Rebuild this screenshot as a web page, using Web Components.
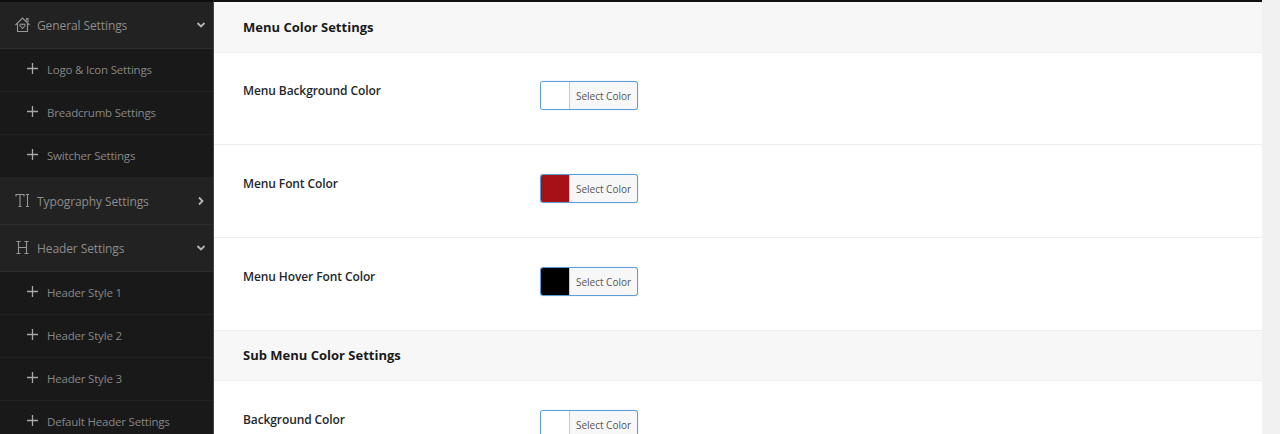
<!DOCTYPE html>
<html>
<head>
<meta charset="utf-8">
<style>
  html, body { margin: 0; height: 434px; overflow: hidden; background: #f1f1f1; font-family: "Open Sans", sans-serif; }
</style>
</head>
<body>
<settings-page>
  <side-nav slot="nav">
    <nav-group label="General Settings" icon="home" open></nav-group>
    <nav-item>Logo &amp; Icon Settings</nav-item>
    <nav-item>Breadcrumb Settings</nav-item>
    <nav-item>Switcher Settings</nav-item>
    <nav-group label="Typography Settings" icon="type"></nav-group>
    <nav-group label="Header Settings" icon="heading" open></nav-group>
    <nav-item>Header Style 1</nav-item>
    <nav-item>Header Style 2</nav-item>
    <nav-item>Header Style 3</nav-item>
    <nav-item>Default Header Settings</nav-item>
  </side-nav>
  <section-head>Menu Color Settings</section-head>
  <color-row label="Menu Background Color" color="#ffffff"></color-row>
  <color-row label="Menu Font Color" color="#a51116"></color-row>
  <color-row label="Menu Hover Font Color" color="#000000"></color-row>
  <section-head>Sub Menu Color Settings</section-head>
  <color-row label="Background Color" color="#ffffff"></color-row>
</settings-page>

<script>
class SettingsPage extends HTMLElement {
  constructor() {
    super();
    this.attachShadow({ mode: 'open' }).innerHTML = `
      <style>
        :host { display: grid; grid-template-columns: 214px 1048px 18px; height: 434px; overflow: hidden; }
        .main { background: #fff; border-top: 2px solid #111; overflow: hidden; min-width: 0; }
        .gutter { background: #f1f1f1; }
      </style>
      <slot name="nav"></slot>
      <div class="main"><slot></slot></div>
      <div class="gutter"></div>`;
  }
}

class SideNav extends HTMLElement {
  constructor() {
    super();
    this.attachShadow({ mode: 'open' }).innerHTML = `
      <style>
        :host { display: block; background: #191919; border-top: 2px solid #0d0d0d; border-right: 1px solid #444; height: 432px; overflow: hidden; }
      </style>
      <slot></slot>`;
  }
}

const NAV_ICONS = {
  home: `<path d="M.5 9 7.5 2l7 7M2.5 7.5V15.5h10V7.5M11.5 4.5V2.5H13v3.5"/><path d="M7.5 12.5 5.2 10c-1-1.400 1.100-2.900 2.300-1.300C8.700 7.100 10.800 8.600 9.800 10z"/>`,
  type: `<path d="M1 4.500V2.500h8v2M5 2.500v12M3.500 14.500h3M11 2.500h3M12.500 2.500v12M11 14.500h3"/>`,
  heading: `<path d="M1.500 2.500h4M3.500 2.500v12M1.500 14.500h4M9.500 2.500h4M11.500 2.500v12M9.500 14.500h4M3.500 8.500h8"/>`,
};

class NavGroup extends HTMLElement {
  constructor() {
    super();
    this.attachShadow({ mode: 'open' });
  }

  connectedCallback() {
    const open = this.hasAttribute('open');
    const icon = NAV_ICONS[this.getAttribute('icon')] || '';
    const chevron = open ? 'M1.5 3 5 6.5 8.5 3' : 'M3 1.500 6.500 5 3 8.500';
    this.shadowRoot.innerHTML = `
      <style>
        :host { display: flex; align-items: center; height: 47px; box-sizing: border-box; padding: 0 7px 0 15px; background: #222; border-bottom: 1px solid #2e2e2e; color: #8c8c8c; font-size: 12px; letter-spacing: -.1px; }
        .icon { width: 18px; height: 18px; margin-right: 4px; fill: none; stroke: #969696; stroke-width: 1.1; }
        .label { flex: 1; }
        .chev { width: 10px; height: 10px; fill: none; stroke: #b5b5b5; stroke-width: 1.8; }
      </style>
      <svg class="icon" viewBox="0 0 18 18">${icon}</svg>
      <span class="label">${this.getAttribute('label')}</span>
      <svg class="chev" viewBox="0 0 10 10"><path d="${chevron}"/></svg>`;
  }
}

class NavItem extends HTMLElement {
  constructor() {
    super();
    this.attachShadow({ mode: 'open' }).innerHTML = `
      <style>
        :host { display: flex; align-items: center; height: 43px; box-sizing: border-box; padding: 0 0 2px 27px; background: #191919; border-bottom: 1px solid #222; color: #868686; font-size: 11.5px; letter-spacing: -.2px; }
        svg { width: 11px; height: 11px; margin-right: 9px; stroke: #a8a8a8; stroke-width: 1.3; fill: none; position: relative; top: -1px; }
      </style>
      <svg viewBox="0 0 11 11"><path d="M5.5 0v11M0 5.5h11"/></svg>
      <span><slot></slot></span>`;
  }
}

class SectionHead extends HTMLElement {
  constructor() {
    super();
    this.attachShadow({ mode: 'open' }).innerHTML = `
      <style>
        :host { display: flex; align-items: center; height: 50.75px; box-sizing: border-box; padding: 0 29px; background: #f7f7f7; border-bottom: 1px solid #eee; color: #1a1a1a; font-size: 13px; font-weight: 700; }
      </style>
      <slot></slot>`;
  }
}

class ColorRow extends HTMLElement {
  constructor() {
    super();
    this.attachShadow({ mode: 'open' });
  }

  connectedCallback() {
    this.shadowRoot.innerHTML = `
      <style>
        :host { display: grid; grid-template-columns: 297px auto; justify-content: start; height: 92.6px; box-sizing: border-box; padding: 28.6px 29px 0; border-bottom: 1px solid #eee; }
        .label { color: #23282d; font-size: 12px; font-weight: 600; line-height: 20px; letter-spacing: -.1px; }
      </style>
      <div class="label">${this.getAttribute('label')}</div>
      <color-button color="${this.getAttribute('color')}"></color-button>`;
  }
}

class ColorButton extends HTMLElement {
  constructor() {
    super();
    this.attachShadow({ mode: 'open' });
  }

  connectedCallback() {
    this.shadowRoot.innerHTML = `
      <style>
        :host { display: flex; width: 98px; height: 29px; box-sizing: border-box; border: 1px solid #5b9dd9; border-radius: 3px; overflow: hidden; background: #f7f7f7; box-shadow: 0 0 1px rgba(30,140,190,.5); }
        .swatch { width: 28px; background: ${this.getAttribute('color')}; border-right: 1px solid #ccc; flex: none; }
        .text { flex: 1; text-align: center; color: #555; font-size: 10px; line-height: 28px; white-space: nowrap; }
      </style>
      <span class="swatch"></span>
      <span class="text">Select Color</span>`;
  }
}

customElements.define('settings-page', SettingsPage);
customElements.define('side-nav', SideNav);
customElements.define('nav-group', NavGroup);
customElements.define('nav-item', NavItem);
customElements.define('section-head', SectionHead);
customElements.define('color-row', ColorRow);
customElements.define('color-button', ColorButton);
</script>
</body>
</html>
